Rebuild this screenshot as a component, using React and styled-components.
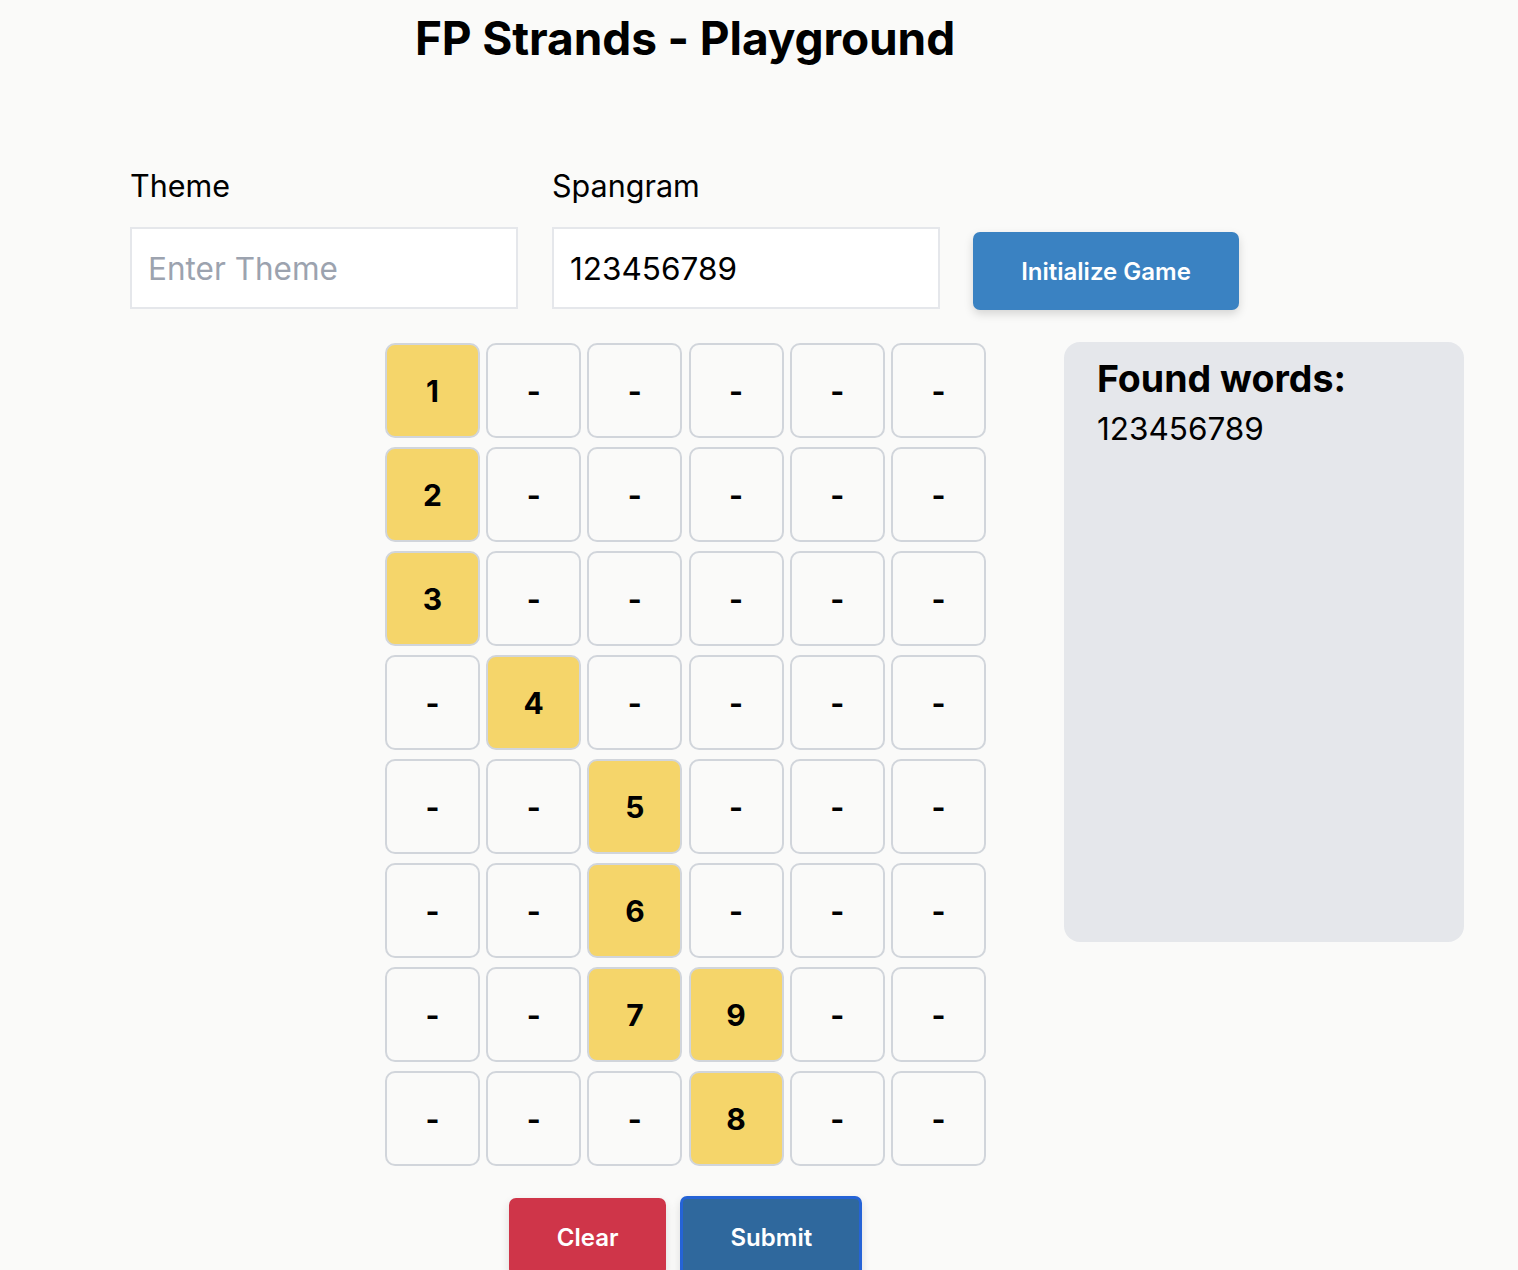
import React from "react";
import styled, { createGlobalStyle } from "styled-components";

const GlobalStyle = createGlobalStyle`
    body {
        margin: 0;
        background: #fafaf9;
        font-family: Inter, "Noto Sans", sans-serif;
        color: #000000;
    }
`;

const Page = styled.div`
    box-sizing: border-box;
    width: 100%;
    min-height: 1270px;
    padding: 10px 0 0 130px;
`;

const Title = styled.h1`
    width: 1110px;
    margin: 0 0 101px;

    font-size: 46px;
    font-weight: 700;
    line-height: 56px;
    text-align: center;
    letter-spacing: -0.1px;
`;

const FormRow = styled.div`
    display: flex;
    align-items: flex-end;
    gap: 34px;
`;

const Field = styled.label`
    display: flex;
    flex-direction: column;
    gap: 23px;
`;

const Label = styled.span`
    font-size: 30.5px;
    line-height: 37px;
    color: #000000;
`;

const Input = styled.input`
    box-sizing: border-box;
    width: 388px;
    height: 82px;
    padding: 0 16px;

    background: #ffffff;
    border: 2px solid #e5e7eb;
    outline: none;

    font-family: Inter, "Noto Sans", sans-serif;
    font-size: 31.5px;
    color: #000000;

    &::placeholder {
        color: #9ca3af;
    }
`;

const InitButton = styled.button`
    width: 266px;
    height: 78px;
    margin: 0 0 -1px -1px;

    background: #3a82c2;
    border: none;
    border-radius: 7px;
    box-shadow: 0 4px 10px rgba(0, 0, 0, 0.15);

    font-family: Inter, "Noto Sans", sans-serif;
    font-size: 24px;
    font-weight: 600;
    color: #ffffff;
    cursor: pointer;
`;

const BoardRow = styled.div`
    display: flex;
    align-items: flex-start;
    gap: 78px;
    margin-top: 33px;
    padding-left: 255px;
`;

const GameColumn = styled.div`
    display: flex;
    flex-direction: column;
    align-items: center;
    gap: 30px;
    margin-top: 1px;
`;

const Board = styled.div`
    display: grid;
    grid-template-columns: repeat(6, 95px);
    grid-auto-rows: 95px;
    column-gap: 6.2px;
    row-gap: 9px;
`;

const Cell = styled.div`
    box-sizing: border-box;
    display: flex;
    align-items: center;
    justify-content: center;

    background: ${({ selected }) => (selected ? "#f5d56a" : "#fafaf9")};
    border: 2px solid #d1d5db;
    border-radius: 10px;

    font-size: 30px;
    font-weight: 700;
`;

const Actions = styled.div`
    display: flex;
    align-items: center;
    gap: 14px;
`;

const ActionButton = styled.button`
    box-sizing: border-box;
    height: ${({ focused }) => (focused ? "82px" : "78px")};
    padding: 0 ${({ focused }) => (focused ? "47px" : "48px")};

    background: ${({ color }) => color};
    border: ${({ focused }) => (focused ? "3px solid #2563d6" : "none")};
    border-radius: 7px;
    box-shadow: 0 4px 10px rgba(0, 0, 0, 0.12);

    font-family: Inter, "Noto Sans", sans-serif;
    font-size: 24px;
    font-weight: 600;
    color: #ffffff;
    cursor: pointer;
`;

const FoundPanel = styled.aside`
    box-sizing: border-box;
    width: 400px;
    height: 600px;
    padding: 14px 33px;

    background: #e5e7eb;
    border-radius: 16px;
`;

const FoundTitle = styled.h2`
    margin: 0 0 10px;

    font-size: 37.5px;
    font-weight: 700;
    line-height: 45px;
`;

const FoundWord = styled.div`
    font-size: 31.5px;
    line-height: 36px;
`;

const layout = [
    ["1", "-", "-", "-", "-", "-"],
    ["2", "-", "-", "-", "-", "-"],
    ["3", "-", "-", "-", "-", "-"],
    ["-", "4", "-", "-", "-", "-"],
    ["-", "-", "5", "-", "-", "-"],
    ["-", "-", "6", "-", "-", "-"],
    ["-", "-", "7", "9", "-", "-"],
    ["-", "-", "-", "8", "-", "-"],
];

const App = () => {
    return (
        <Page>
            <GlobalStyle />
            <Title>FP Strands - Playground</Title>

            <FormRow>
                <Field>
                    <Label>Theme</Label>
                    <Input placeholder="Enter Theme" />
                </Field>
                <Field>
                    <Label>Spangram</Label>
                    <Input defaultValue="123456789" />
                </Field>
                <InitButton>Initialize Game</InitButton>
            </FormRow>

            <BoardRow>
                <GameColumn>
                    <Board>
                        {layout.flat().map((value, i) => (
                            <Cell key={i} selected={value !== "-"}>
                                {value}
                            </Cell>
                        ))}
                    </Board>
                    <Actions>
                        <ActionButton color="#cf3549">Clear</ActionButton>
                        <ActionButton color="#2f689d" focused>
                            Submit
                        </ActionButton>
                    </Actions>
                </GameColumn>

                <FoundPanel>
                    <FoundTitle>Found words:</FoundTitle>
                    <FoundWord>123456789</FoundWord>
                </FoundPanel>
            </BoardRow>
        </Page>
    );
};

export default App;
